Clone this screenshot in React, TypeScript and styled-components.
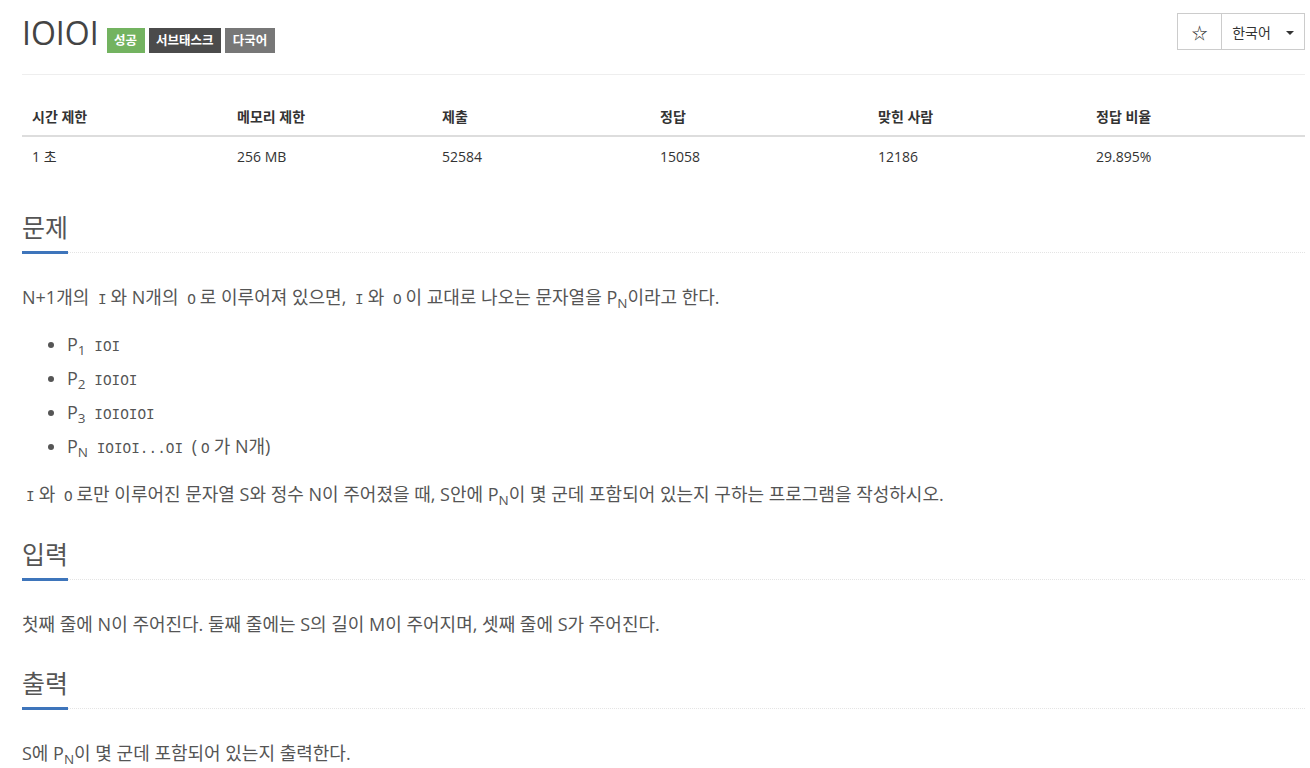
import React from "react";
import styled, { createGlobalStyle } from "styled-components";

const Global = createGlobalStyle`
  html, body { margin: 0; padding: 0; background: #fff; }
  body {
    font-family: "Open Sans", "Noto Sans CJK KR", sans-serif;
    color: #333;
    font-size: 14px;
  }
`;

const Page = styled.div`
  padding: 0 5px 0 22px;
`;

const Header = styled.header`
  display: flex;
  justify-content: space-between;
  align-items: flex-start;
  height: 75px;
  box-sizing: border-box;
  padding-top: 13px;
  border-bottom: 1px solid #eee;
`;

const TitleRow = styled.div`
  display: flex;
  align-items: flex-start;
  gap: 4px;
`;

const Title = styled.h1`
  margin: 0 4px 0 0;
  font-size: 32px;
  font-weight: 400;
  line-height: 40px;
  color: #444;
`;

const Label = styled.span<{ $bg: string }>`
  margin-top: 15px;
  display: inline-block;
  height: 25px;
  line-height: 25px;
  padding: 0 7.5px;
  font-size: 12.5px;
  font-weight: 700;
  color: #fff;
  background: ${(p) => p.$bg};
`;

const BtnGroup = styled.div`
  display: flex;
`;

const Btn = styled.button<{ $w: number }>`
  display: flex;
  align-items: center;
  justify-content: center;
  gap: 15px;
  width: ${(p) => p.$w}px;
  height: 37px;
  box-sizing: border-box;
  background: #fff;
  border: 1px solid #ccc;
  margin-left: -1px;
  font-family: "Open Sans", "Noto Sans CJK KR", sans-serif;
  font-size: 14px;
  color: #333;
  padding: 0;
  &:first-child { margin-left: 0; font-size: 16px; }
`;

const Caret = styled.span`
  width: 0;
  height: 0;
  border-left: 4px solid transparent;
  border-right: 4px solid transparent;
  border-top: 4px solid #333;
  margin-top: 2px;
`;

const Table = styled.table`
  width: 100%;
  border-collapse: collapse;
  margin-top: 24px;
  margin-bottom: 38px;
  table-layout: fixed;
`;

const Th = styled.th<{ $w: number }>`
  box-sizing: border-box;
  width: ${(p) => p.$w}px;
  text-align: left;
  font-weight: 700;
  font-size: 14px;
  line-height: 20px;
  padding: 8px 10px;
  border-bottom: 2px solid #ddd;
  color: #333;
`;

const Td = styled.td`
  font-size: 14px;
  line-height: 20px;
  padding: 10px 10px;
  color: #333;
`;

const Section = styled.section`
  color: #555;
  font-size: 18px;
`;

const Headline = styled.div`
  border-bottom: 1px dotted #e4e4e4;
  margin-bottom: 30px;
`;

const H2 = styled.h2`
  display: inline-block;
  margin: 0 0 -2px 0;
  padding-bottom: 11px;
  font-size: 25px;
  font-weight: 400;
  line-height: 25px;
  color: #555;
  border-bottom: 3px solid #3e75bb;
`;

const Para = styled.p`
  margin: 0 0 33px 0;
  line-height: 28.8px;
`;

const List = styled.ul`
  margin: -15px 0 19px 0;
  padding-left: 45px;
`;

const Item = styled.li`
  line-height: 29px;
  height: 29px;
  margin-bottom: 5px;
`;

const Code = styled.code`
  font-family: "Liberation Mono", "DejaVu Sans Mono", monospace;
  font-size: 14.4px;
  line-height: 1;
  padding: 2px 4px;
  color: #555;
`;

const Sub = styled.sub`
  font-size: 75%;
  line-height: 0;
  vertical-align: -0.3em;
`;

const P = ({ s }: { s: string }) => (
  <>
    P<Sub>{s}</Sub>
  </>
);

const cols = [
  ["시간 제한", "1 초", 205],
  ["메모리 제한", "256 MB", 205],
  ["제출", "52584", 218],
  ["정답", "15058", 218],
  ["맞힌 사람", "12186", 218],
  ["정답 비율", "29.895%", 219],
] as const;

export default function App() {
  return (
    <>
      <Global />
      <Page>
        <Header>
          <TitleRow>
            <Title>IOIOI</Title>
            <Label $bg="#73b360">성공</Label>
            <Label $bg="#4b4b4b">서브태스크</Label>
            <Label $bg="#777">다국어</Label>
          </TitleRow>
          <BtnGroup>
            <Btn $w={45}>☆</Btn>
            <Btn $w={84}>
              한국어 <Caret />
            </Btn>
          </BtnGroup>
        </Header>

        <Table>
          <thead>
            <tr>
              {cols.map(([h, , w]) => (
                <Th key={h} $w={w}>
                  {h}
                </Th>
              ))}
            </tr>
          </thead>
          <tbody>
            <tr>
              {cols.map(([h, v]) => (
                <Td key={h}>{v}</Td>
              ))}
            </tr>
          </tbody>
        </Table>

        <Section>
          <Headline>
            <H2>문제</H2>
          </Headline>
          <Para>
            N+1개의 <Code>I</Code>와 N개의 <Code>O</Code>로 이루어져 있으면, <Code>I</Code>와{" "}
            <Code>O</Code>이 교대로 나오는 문자열을 <P s="N" />이라고 한다.
          </Para>
          <List>
            <Item>
              <P s="1" /> <Code>IOI</Code>
            </Item>
            <Item>
              <P s="2" /> <Code>IOIOI</Code>
            </Item>
            <Item>
              <P s="3" /> <Code>IOIOIOI</Code>
            </Item>
            <Item>
              <P s="N" /> <Code>IOIOI...OI</Code> (<Code>O</Code>가 N개)
            </Item>
          </List>
          <Para>
            <Code>I</Code>와 <Code>O</Code>로만 이루어진 문자열 S와 정수 N이 주어졌을 때, S안에{" "}
            <P s="N" />이 몇 군데 포함되어 있는지 구하는 프로그램을 작성하시오.
          </Para>
        </Section>

        <Section>
          <Headline>
            <H2>입력</H2>
          </Headline>
          <Para>첫째 줄에 N이 주어진다. 둘째 줄에는 S의 길이 M이 주어지며, 셋째 줄에 S가 주어진다.</Para>
        </Section>

        <Section>
          <Headline>
            <H2>출력</H2>
          </Headline>
          <Para>
            S에 <P s="N" />이 몇 군데 포함되어 있는지 출력한다.
          </Para>
        </Section>
      </Page>
    </>
  );
}
